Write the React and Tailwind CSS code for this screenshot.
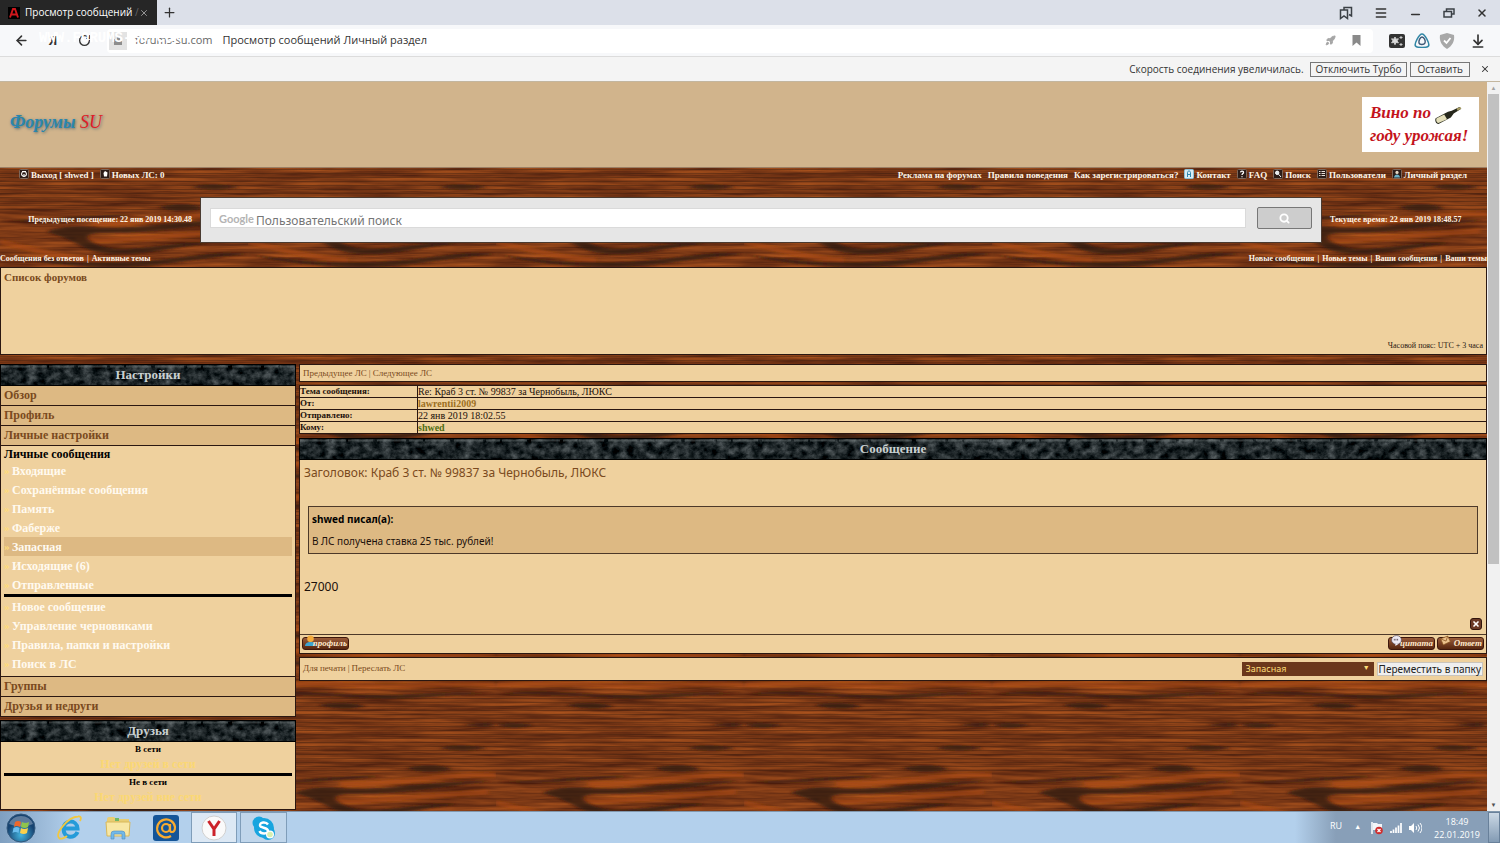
import React, { useState } from 'react';
import {
  ArrowLeft,
  ArrowDownToLine,
  Menu,
  Minus,
  Plus,
  Rocket,
  RotateCw,
  Search,
  X
} from 'lucide-react';

const folders = [
  'Входящие',
  'Сохранённые сообщения',
  'Память',
  'Фаберже',
  'Запасная',
  'Исходящие (6)',
  'Отправленные'
];

const actions = ['Новое сообщение', 'Управление черновиками', 'Правила, папки и настройки', 'Поиск в ЛС'];

const details = [
  { label: 'Тема сообщения:', value: 'Re: Краб 3 ст. № 99837 за Чернобыль, ЛЮКС' },
  { label: 'От:', value: 'lawrentii2009', link: 'text-[#9c6f1e]' },
  { label: 'Отправлено:', value: '22 янв 2019 18:02.55' },
  { label: 'Кому:', value: 'shwed', link: 'text-[#4f6f14]' }
];

// Thin horizontal grain lines in the middle of each plank
const grainLines = [55, 59, 63, 67, 71, 75, 79, 83, 87, 91, 95, 99, 103, 107, 111, 115, 119, 123, 127];

// Repeating wood planks behind the whole forum page
function WoodTexture() {
  return (
    <svg className="absolute inset-0 h-full w-full" aria-hidden="true">
      <defs>
        <filter id="grain" x="0" y="0" width="100%" height="100%" colorInterpolationFilters="sRGB">
          <feTurbulence type="fractalNoise" baseFrequency="0.012 0.22" numOctaves="4" seed="11" stitchTiles="stitch" />
          <feColorMatrix values="0.5 0 0 0 0.24  0.28 0 0 0 0.085  0.08 0 0 0 0.045  0 0 0 0 1" />
        </filter>
        <filter id="soft" x="-20%" y="-50%" width="140%" height="200%">
          <feGaussianBlur stdDeviation="2 0.9" />
        </filter>
        <pattern id="wood" width="248" height="187" patternUnits="userSpaceOnUse">
          <rect width="248" height="187" fill="#803a15" />
          <rect width="248" height="187" filter="url(#grain)" />
          <g stroke="#3c1e0e" strokeOpacity="0.4" strokeWidth="1">
            {grainLines.map((y) => (
              <path key={y} d={`M0 ${y}.5H248`} />
            ))}
          </g>
          <g fill="none" stroke="#b04c10" strokeOpacity="0.6" strokeWidth="5" filter="url(#soft)">
            <path d="M0 42C50 38 95 43 150 43S215 38 248 42" />
            <path d="M75 157C120 160 160 154 240 149" />
            <path d="M0 160C30 166 65 177 100 178" />
            <path d="M92 141C145 143 196 130 248 132" />
            <path d="M0 10C60 6 120 16 248 10" />
          </g>
          <g fill="#2f1710" fillOpacity="0.75" filter="url(#soft)">
            <path d="M46 150C60 144 80 143 100 146C145 146 190 137 248 138C200 143 150 152 105 151C85 151 80 155 100 164C130 173 170 158 210 161C160 168 120 178 90 168C75 162 65 154 46 150Z" />
            <path d="M0 51C40 46 80 51 120 52S200 46 248 51C205 50 165 58 118 55S38 51 0 51Z" />
            <path d="M0 138C55 139 95 130 140 133C95 136 50 143 0 138Z" />
            <path d="M70 62C84 59 102 59 118 63C102 67 84 66 70 62Z" />
            <path d="M0 82C12 79 28 80 38 82C24 86 10 85 0 82Z" />
            <path d="M215 82C229 80 240 79 248 82C240 85 229 84 215 82Z" />
            <path d="M190 105C206 101 225 102 240 105C222 109 205 108 190 105Z" />
            <path d="M158 125C174 121 192 121 205 126C190 130 170 130 158 125Z" />
            <path d="M0 172C40 178 80 182 130 180S210 168 248 172C205 175 160 186 110 185S30 180 0 172Z" />
            <path d="M0 20C60 12 110 26 160 23S220 17 248 20C210 24 170 31 125 27S40 21 0 20Z" />
          </g>
        </pattern>
      </defs>
      <rect width="100%" height="100%" fill="url(#wood)" />
    </svg>
  );
}

function MarbleTitle({ id, children }) {
  return (
    <h2 className="relative h-[22px] overflow-hidden border border-black bg-[#152022] text-center font-['Liberation_Serif',serif] text-[13px] leading-[20px] font-bold text-[#c9d0d1]">
      <svg className="absolute inset-0 h-full w-full" aria-hidden="true">
        <defs>
          <filter id={id} x="0" y="0" width="100%" height="100%" colorInterpolationFilters="sRGB">
            <feTurbulence type="fractalNoise" baseFrequency="0.11 0.13" numOctaves="6" seed="4" />
            <feColorMatrix values="0.6 0 0 0 -0.18  0.6 0 0 0 -0.15  0.6 0 0 0 -0.14  0 0 0 0 1" />
          </filter>
        </defs>
        <rect width="100%" height="100%" filter={`url(#${id})`} />
        <path d="M0 1.5H1500" stroke="#8b9496" strokeOpacity="0.35" strokeWidth="2" strokeDasharray="29 3 14 2 25 4" />
      </svg>
      <span className="relative">{children}</span>
    </h2>
  );
}

function BadgeIcon({ kind }) {
  return (
    <svg viewBox="0 0 10 10" className="mb-1 inline-block h-[10px] w-[10px]" aria-hidden="true">
      <rect x="0.5" y="0.5" width="9" height="9" rx="1" fill={kind === 'contact' ? '#d8edf5' : '#2b1c18'} stroke={kind === 'contact' ? '#8cc0d6' : '#7d685c'} />
      {kind === 'exit' && <path d="M3.4 3.2a2.4 2.4 0 1 0 3.2 0M3 2.6h4M5 5v3" fill="none" stroke="#fff" strokeWidth="1.1" />}
      {kind === 'mail' && <path d="M5 2l2.5 1.5L7 7.5H4L3.5 4z" fill="#fff" />}
      {kind === 'contact' && <path d="M3.500 8V3.500C3.500 1.500 6.500 1.500 6.500 3.500V8M3.500 5.500h3" fill="none" stroke="#2f86ad" />}
      {kind === 'faq' && <path d="M3.500 3.300C3.800 1.500 6.700 1.800 6.500 3.600C6.400 4.600 5 4.700 5 6M5 7.200v1" fill="none" stroke="#fff" strokeWidth="1.300" />}
      {kind === 'search' && <path d="M2.500 3.800a1.700 1.700 0 1 0 3.400 0a1.700 1.700 0 1 0-3.400 0M5.500 5.200L8 8" fill="#dfe9ec" stroke="#fff" />}
      {kind === 'users' && <path d="M2 2.500h1.500M4.500 2.500h3.500M2 4.500h1.500M4.500 4.500h3.500M2 6.500h1.500M4.500 6.500h3.500" stroke="#e8dfd8" />}
      {kind === 'panel' && (
        <>
          <circle cx="5" cy="3.4" r="1.6" fill="#e6d8c4" />
          <path d="M2 8.500C2.200 4.600 7.800 4.600 8 8.500z" fill="#6ab2c8" />
        </>
      )}
    </svg>
  );
}

function NavLink({ icon, children }) {
  return (
    <a href="#" className="inline-flex items-center gap-[2px] whitespace-nowrap">
      {icon && <BadgeIcon kind={icon} />}
      <span>{children}</span>
    </a>
  );
}

function BrowserChrome() {
  return (
    <header className="shrink-0 font-['Open_Sans','Noto_Sans',sans-serif] text-[#333]">
      <div className="flex h-[25px] items-center bg-[#dce0e9]">
        <div className="flex h-full w-[157px] items-center bg-[#262626] px-2 text-white">
          <svg viewBox="0 0 12 12" className="mr-[5px] h-3 w-3 shrink-0" aria-hidden="true">
            <rect width="12" height="12" fill="#000" />
            <path d="M2 10.500L5 2h2l3 8.500M3.600 7.500h4.800" fill="none" stroke="#d0171c" strokeWidth="1.900" />
          </svg>
          <span className="flex-1 text-[10px] whitespace-nowrap">
            Просмотр сообщений <span className="text-[#666]">/</span>
          </span>
          <button aria-label="Закрыть вкладку" className="text-[#aaa]">
            <X size={10} />
          </button>
        </div>
        <button aria-label="Новая вкладка" className="ml-[5px]">
          <Plus size={15} strokeWidth={2} />
        </button>
        <div className="ml-auto flex items-center gap-[21px] pr-3">
          <button aria-label="Закладки">
            <svg viewBox="0 0 14 14" className="h-[14px] w-[14px]" fill="none" stroke="#3b4046" strokeWidth="1.500" aria-hidden="true">
              <path d="M5 4V1.500h7.500V10L10 8.500M1.500 4h7v8.500L5 10l-3.500 2.500z" />
            </svg>
          </button>
          <button aria-label="Меню"><Menu size={14} strokeWidth={2.5} /></button>
          <button aria-label="Свернуть" className="pt-1"><Minus size={13} strokeWidth={3} /></button>
          <button aria-label="Развернуть">
            <svg viewBox="0 0 12 12" className="h-3 w-3" fill="none" stroke="#3b4046" strokeWidth="1.500" aria-hidden="true">
              <path d="M3.500 4V2H11v5H9M1 4.500h7.500V10H1z" />
            </svg>
          </button>
          <button aria-label="Закрыть"><X size={12} strokeWidth={3} /></button>
        </div>
      </div>

      <div className="relative flex h-[32px] items-center border-b border-[#dcdcdc] bg-[#f7f8fa] pl-[14px]">
        <button aria-label="Назад"><ArrowLeft size={15} strokeWidth={2.5} /></button>
        <button aria-label="Яндекс" className="ml-[18px] w-3 text-[13px] font-bold">Я</button>
        <button aria-label="Обновить" className="ml-[19px]"><RotateCw size={13} strokeWidth={2.5} /></button>
        <div className="ml-[16px] flex h-[24px] min-w-0 flex-1 items-center rounded bg-white pr-3">
          <svg viewBox="0 0 18 18" className="mx-[2px] h-[18px] w-[18px] shrink-0" aria-hidden="true">
            <rect width="18" height="18" fill="#e3e3e3" />
            <path d="M5 13V7h3V5h3v4h2v4z" fill="#8d8d8d" />
          </svg>
          <span className="ml-[6px] shrink-0 text-[11px] text-[#666]">forums-su.com</span>
          <input aria-label="Адрес" defaultValue="Просмотр сообщений Личный раздел" className="ml-[10px] min-w-0 flex-1 text-[11px] outline-none" />
          <Rocket size={11} className="mr-4 fill-[#a5a5a5] text-[#a5a5a5]" />
          <svg viewBox="0 0 9 11" className="h-[11px] w-[9px]" aria-hidden="true">
            <path d="M0.500 0h8v11L4.500 7.500L0.500 11z" fill="#8a8a8a" />
          </svg>
        </div>
        <div className="flex items-center gap-[9px] pr-[14px] pl-[16px]">
          <svg viewBox="0 0 16 14" className="h-[14px] w-4" aria-hidden="true">
            <rect width="16" height="14" rx="2" fill="#333" />
            <path d="M6 3l1 2.200 2.400-.4-1.300 2 1.300 2-2.400-.3-1 2.200-1-2.200-2.400.3 1.300-2-1.300-2 2.400.4zM12 2v3M10.500 3.500h3M12 9v3M10.500 10.500h3" fill="#ddd" stroke="#ccc" />
          </svg>
          <svg viewBox="0 0 16 15" className="h-[15px] w-4" fill="none" aria-hidden="true">
            <path d="M8 1C5 1 0 11 1.500 13s11.500 2 13 0S11 1 8 1z" stroke="#3186a5" strokeWidth="1.600" />
            <path d="M8 4c-2 0-3.500 4-3 6s5 2 6 0-1-6-3-6z" stroke="#3e5977" strokeWidth="1.500" />
          </svg>
          <svg viewBox="0 0 16 16" className="h-4 w-4" aria-hidden="true">
            <path d="M1 2l7-2 7 2c1 6-2 11-7 14C3 13 0 8 1 2z" fill="#a8a8a8" />
            <path d="M5 7.500l2.500 2.500L11.500 5" fill="none" stroke="#fff" strokeWidth="1.800" />
          </svg>
          <button aria-label="Загрузки" className="ml-[6px]"><ArrowDownToLine size={16} strokeWidth={2.5} /></button>
        </div>
        <span className="absolute top-[3px] left-[39px] font-['Liberation_Mono',monospace] text-[14px] font-bold text-white">
          WWW.FORUMS-SU.COM
        </span>
      </div>

      <div className="flex h-[25px] items-center justify-end border-b border-[#c3b69f] bg-[#f4f4f4] pr-[10px] text-[10px]">
        <span className="mr-[6px]">Скорость соединения увеличилась.</span>
        <button className="mr-[3px] h-[15px] border border-[#777] px-[5px] leading-[13px]">Отключить Турбо</button>
        <button className="h-[15px] border border-[#777] px-[6px] leading-[13px]">Оставить</button>
        <button aria-label="Закрыть" className="ml-[10px]"><X size={10} strokeWidth={2.5} /></button>
      </div>
    </header>
  );
}

function ForumHeader() {
  return (
    <>
      <div className="flex h-[86px] items-center justify-between border-b border-[#9a7f65] bg-[#d1b48c] pr-2 pl-[10px]">
        <a href="#" className="pb-1 font-['Liberation_Serif',serif] text-[18px] font-bold text-[#2a86ad] italic [text-shadow:1px_1px_3px_#5a6a70]">
          Форумы <span className="font-normal text-[#e01c26]">SU</span>
        </a>
        <a href="#" className="relative flex h-[55px] w-[117px] flex-col justify-center bg-white pb-[2px] pl-2 font-['Liberation_Serif',serif] text-[17px] leading-[23px] font-bold text-[#c4141c] italic">
          <span>Вино по</span>
          <span className="whitespace-nowrap">году урожая!</span>
          <svg viewBox="0 0 30 20" className="absolute top-[9px] right-[16px] h-[19px] w-[30px]" aria-hidden="true">
            <path d="M2 13L15 6l4-1 8-4 2 2-8 5-3 4L5 19c-3 0-4-4-3-6z" fill="#26281c" />
            <path d="M3 13l8-4 3 5-9 4c-2 0-3-3-2-5z" fill="#e4dfba" />
            <path d="M24 2.500L28 1l1 2-4 2z" fill="#a59b63" />
          </svg>
        </a>
      </div>

      <nav className="flex h-[15px] justify-between pr-[20px] pl-[19px] text-[9px] leading-[15px] font-bold text-[#fff5e6]">
        <div className="flex gap-[6px]">
          <NavLink icon="exit">Выход [ shwed ]</NavLink>
          <NavLink icon="mail">Новых ЛС: 0</NavLink>
        </div>
        <div className="flex gap-[6px]">
          <NavLink>Реклама на форумах</NavLink>
          <NavLink>Правила поведения</NavLink>
          <NavLink>Как зарегистрироваться?</NavLink>
          <NavLink icon="contact">Контакт</NavLink>
          <NavLink icon="faq">FAQ</NavLink>
          <NavLink icon="search">Поиск</NavLink>
          <NavLink icon="users">Пользователи</NavLink>
          <NavLink icon="panel">Личный раздел</NavLink>
        </div>
      </nav>

      <div className="mt-[14px] flex items-center text-[8px] font-bold whitespace-nowrap text-[#fff5e6]">
        <p className="w-[200px] shrink-0 pr-2 text-right">Предыдущее посещение: 22 янв 2019 14:30.48</p>
        <form className="flex h-[46px] min-w-0 flex-1 items-start gap-[11px] border border-[#4a3a30] bg-[#e6e6e6] px-[9px] pt-[9px]" onSubmit={(e) => e.preventDefault()}>
          <label className="mt-[1px] flex h-[20px] min-w-0 flex-1 items-center border border-[#dadada] bg-white pl-2">
            <span className="pt-[2px] font-['Lato',sans-serif] text-[11px] text-[#b4b4b4]">Google</span>
            <input
              name="query"
              placeholder="Пользовательский поиск"
              className="ml-[2px] h-full min-w-0 flex-1 pt-1 font-['Noto_Sans',sans-serif] text-[12px] font-normal outline-none placeholder:text-[#757575]"
            />
          </label>
          <button aria-label="Поиск" className="flex h-[22px] w-[55px] items-center justify-center rounded-[2px] border border-[#777] bg-[#cdcdcd] text-white">
            <Search size={11} strokeWidth={4} />
          </button>
        </form>
        <p className="w-[165px] shrink-0 pl-2">Текущее время: 22 янв 2019 18:48.57</p>
      </div>

      <div className="mt-2 flex h-[16px] justify-between text-[8px] leading-[15px] font-bold text-[#fff5e6]">
        <div className="flex gap-[3px]">
          <a href="#">Сообщения без ответов</a>
          <span>|</span>
          <a href="#">Активные темы</a>
        </div>
        <div className="flex gap-[3px]">
          <a href="#">Новые сообщения</a>
          <span>|</span>
          <a href="#">Новые темы</a>
          <span>|</span>
          <a href="#">Ваши сообщения</a>
          <span>|</span>
          <a href="#">Ваши темы</a>
        </div>
      </div>

      <div className="flex h-[88px] flex-col justify-between border border-[#2a1711] bg-[#efd19e] px-[3px] py-[1px]">
        <a href="#" className="text-[11px] leading-[16px] font-bold text-[#7a4a20]">Список форумов</a>
        <p className="text-right text-[8px] leading-[14px] text-[#2a1711]">Часовой пояс: UTC + 3 часа</p>
      </div>
    </>
  );
}

function SectionLink({ children }) {
  return (
    <a href="#" className="block border-b border-[#2a1711] bg-[#ddb983] px-[3px] text-[12px] leading-[19px] font-bold text-[#7a4a20]">
      {children}
    </a>
  );
}

function FolderLink({ active, children }) {
  return (
    <li className={active ? 'bg-[#ddb983]' : ''}>
      <a href="#" className="flex h-[19px] items-center gap-[2px] text-[12px] font-bold text-[#fffaf0]">
        <span className="w-[6px] text-[11px] text-[#ffdc78]">»</span>
        {children}
      </a>
    </li>
  );
}

function Sidebar() {
  return (
    <aside className="w-[296px] shrink-0">
      <MarbleTitle id="marble-settings">Настройки</MarbleTitle>
      <div className="border-x border-[#2a1711] bg-[#efd19e]">
        <SectionLink>Обзор</SectionLink>
        <SectionLink>Профиль</SectionLink>
        <SectionLink>Личные настройки</SectionLink>
        <div className="border-b border-[#2a1711] px-[3px] pb-[3px]">
          <h3 className="pt-[2px] text-[12px] leading-[13px] font-bold text-black">Личные сообщения</h3>
          <ul>
            {folders.map((folder) => (
              <FolderLink key={folder} active={folder === 'Запасная'}>{folder}</FolderLink>
            ))}
          </ul>
          <hr className="border-t-[3px] border-black" />
          <ul>
            {actions.map((action) => (
              <FolderLink key={action}>{action}</FolderLink>
            ))}
          </ul>
        </div>
        <SectionLink>Группы</SectionLink>
        <SectionLink>Друзья и недруги</SectionLink>
      </div>
      <div className="mt-[3px]">
        <MarbleTitle id="marble-friends">Друзья</MarbleTitle>
        <div className="border-x border-b border-[#2a1711] bg-[#efd19e] px-[3px] pb-1 text-center font-bold">
          <h3 className="text-[9px] leading-[15px] text-black">В сети</h3>
          <p className="pb-[2px] text-[12px] leading-[14px] text-[#fbd873]">Нет друзей в сети</p>
          <hr className="border-t-[3px] border-black" />
          <h3 className="text-[9px] leading-[13px] text-black">Не в сети</h3>
          <p className="text-[12px] leading-[16px] text-[#fbd873]">Нет друзей вне сети</p>
        </div>
      </div>
    </aside>
  );
}

function ImageButton({ icon, children }) {
  return (
    <button className="relative flex h-[13px] w-[47px] items-center justify-end rounded-[3px] border border-[#3d170c] bg-linear-to-b from-[#9a5c3a] to-[#57260f] pr-[1px] text-[9px] font-bold whitespace-nowrap text-[#ffe9cc] italic">
      <svg viewBox="0 0 10 10" className="absolute -top-[3px] left-[2px] h-[11px] w-[11px]" aria-hidden="true">
        {icon === 'user' && (
          <>
            <circle cx="5" cy="3.500" r="3" fill="#f3aa3c" />
            <path d="M0 10c0-5 10-5 10 0z" fill="#3fa3cf" />
          </>
        )}
        {icon === 'quote' && (
          <>
            <ellipse cx="5" cy="4.500" rx="4.500" ry="4" fill="#eee9f2" stroke="#554a5a" strokeWidth="0.600" />
            <path d="M3 3.500v1.500M4.500 3.500v1.500M6 3.500v1.500" stroke="#554a5a" strokeWidth="0.800" />
            <path d="M4 8l0 2 3-2z" fill="#eee9f2" />
          </>
        )}
        {icon === 'reply' && (
          <>
            <path d="M0.500 3.500L7 1l2.500 5L3 9z" fill="#ecc18d" stroke="#875321" strokeWidth="0.700" />
            <path d="M0.500 3.500L5.500 5.500L7 1" fill="none" stroke="#875321" strokeWidth="0.700" />
          </>
        )}
      </svg>
      <span className="relative">{children}</span>
    </button>
  );
}

function Message() {
  const [folder, setFolder] = useState('Запасная');

  return (
    <main className="min-w-0 flex-1">
      <div className="flex gap-[2px] border border-[#2a1711] bg-[#efd19e] px-[3px] text-[9px] leading-[16px] text-[#7a4a20]">
        <a href="#">Предыдущее ЛС</a>
        <span>|</span>
        <a href="#">Следующее ЛС</a>
      </div>

      <table className="mt-[3px] w-full border-collapse bg-[#efd19e] text-left text-[10px] leading-[11px] text-[#1c100a]">
        <tbody>
          {details.map((row) => (
            <tr key={row.label}>
              <th scope="row" className="w-[118px] border border-[#2a1711] p-0 text-[9px] font-bold">{row.label}</th>
              <td className="border border-[#2a1711] p-0">
                {row.link ? <a href="#" className={`font-bold ${row.link}`}>{row.value}</a> : row.value}
              </td>
            </tr>
          ))}
        </tbody>
      </table>

      <div className="mt-1">
        <MarbleTitle id="marble-message">Сообщение</MarbleTitle>
        <article className="border border-t-0 border-[#2a1711] bg-[#efd19e] font-['Noto_Sans',sans-serif] text-[#1c100a]">
          <div className="flex flex-col px-1 pt-1">
            <h3 className="text-[12px] leading-[18px] text-[#7a4a20]">Заголовок: Краб 3 ст. № 99837 за Чернобыль, ЛЮКС</h3>
            <blockquote className="mx-1 mt-[24px] border border-[#4d3929] bg-[#ddb983] px-[3px] py-1">
              <cite className="block text-[10px] leading-[17px] font-bold text-black not-italic">shwed писал(а):</cite>
              <p className="mt-[5px] text-[10px] leading-[16px]">В ЛС получена ставка 25 тыс. рублей!</p>
            </blockquote>
            <p className="mt-[24px] text-[12px] leading-[18px]">27000</p>
            <button aria-label="Удалить" className="mt-[22px] mb-1 flex h-3 w-3 items-center justify-center self-end rounded-[3px] border border-[#32150c] bg-[#6b3a26] text-white">
              <X size={8} strokeWidth={5} />
            </button>
          </div>
          <div className="flex gap-[2px] border-t border-[#4d3929] px-[2px] pt-[2px] pb-[3px] font-['Liberation_Serif',serif]">
            <ImageButton icon="user">профиль</ImageButton>
            <span className="flex-1" />
            <ImageButton icon="quote">цитата</ImageButton>
            <ImageButton icon="reply">Ответ</ImageButton>
          </div>
        </article>
      </div>

      <div className="mt-[3px] flex h-[24px] items-center border border-[#2a1711] bg-[#efd19e] px-[3px] text-[9px] text-[#7a4a20]">
        <p className="flex flex-1 gap-[2px]">
          <a href="#">Для печати</a>
          <span>|</span>
          <a href="#">Переслать ЛС</a>
        </p>
        <div className="relative">
          <select
            aria-label="Папка"
            value={folder}
            onChange={(e) => setFolder(e.target.value)}
            className="block h-[14px] w-[132px] appearance-none bg-[#6b371c] pl-1 font-['Noto_Sans',sans-serif] text-[9px] leading-[14px] text-[#fbdc78]"
          >
            {folders.map((name) => (
              <option key={name}>{name}</option>
            ))}
          </select>
          <span className="pointer-events-none absolute top-0 right-1 text-[7px] leading-[12px] text-[#fbdc78]">▼</span>
        </div>
        <button className="ml-[3px] h-[14px] border border-[#c9c4bc] bg-[#efefef] px-[1px] font-['Noto_Sans',sans-serif] text-[10px] leading-[12px] whitespace-nowrap text-[#222]">
          Переместить в папку
        </button>
      </div>
    </main>
  );
}

function Taskbar() {
  return (
    <footer className="flex h-[32px] shrink-0 items-center border-t border-[#8197ad] bg-linear-to-r from-[#7f9fc0] via-[#b3d0ec] via-5% to-[#b3d0ec] font-['Open_Sans',sans-serif] text-white">
      <button aria-label="Пуск" className="ml-[6px]">
        <svg viewBox="0 0 30 30" className="h-[30px] w-[30px]" aria-hidden="true">
          <defs>
            <radialGradient id="orb" cy="0.75">
              <stop offset="0" stopColor="#43b5e0" />
              <stop offset="1" stopColor="#174371" />
            </radialGradient>
          </defs>
          <circle cx="15" cy="15" r="14" fill="url(#orb)" stroke="#32587c" />
          <path d="M3 11a13 13 0 0 1 24 0q-11 5-24 0z" fill="#fff" fillOpacity="0.3" />
          <path d="M9 9q3-2 6 0l-1 5q-3-2-6 0z" fill="#ee682b" />
          <path d="M16 9q3 2 7 0l-1 5q-3 2-7 0z" fill="#8fc54b" />
          <path d="M7.500 15q3-2 6 0l-1 5q-3-2-6 0z" fill="#69bdee" />
          <path d="M15 15q3 2 7 0l-1 5q-3 2-7 0z" fill="#fbd04c" />
        </svg>
      </button>
      <button aria-label="Internet Explorer" className="ml-[20px]">
        <svg viewBox="0 0 28 28" className="h-7 w-7" fill="none" aria-hidden="true">
          <path d="M21.500 18C19 24.500 8 25 7.500 15C7 5.500 21 5 21.500 14.500H9" stroke="#259bd9" strokeWidth="4" />
          <path d="M3 24C-1 19 12 3 22 2.500C26 2 25 5 24 7M3 24C5 26 10 23 11 22" stroke="#f1c740" strokeWidth="1.800" />
        </svg>
      </button>
      <button aria-label="Проводник" className="ml-[20px]">
        <svg viewBox="0 0 28 28" className="h-7 w-7" aria-hidden="true">
          <path d="M3 5q0-2 2-2h5l2 2h13v17H3z" fill="#e8cd73" />
          <path d="M2 8h24l-1 14H3z" fill="#f8e7a4" stroke="#d8b85a" />
          <path d="M11 4h4v3h-4z" fill="#6fb765" />
          <path d="M7 25v-5q0-3 3-3h8q3 0 3 3v5h-3v-5h-8v5z" fill="#72b9e8" stroke="#4e8cbf" strokeWidth="0.600" />
        </svg>
      </button>
      <button aria-label="Почта" className="ml-[21px]">
        <svg viewBox="0 0 26 26" className="h-[26px] w-[26px]" fill="none" aria-hidden="true">
          <rect width="26" height="26" rx="3" fill="#145598" />
          <circle cx="13" cy="13" r="4" stroke="#f8ab30" strokeWidth="2.200" />
          <path d="M17 9v6q0 2 2 2q3 0 3-5A9 9 0 1 0 18 21" stroke="#f8ab30" strokeWidth="2.200" />
        </svg>
      </button>
      <button aria-label="Яндекс.Браузер" className="ml-[12px] flex h-full w-[46px] items-center justify-center border border-[#7f9db9] bg-[#dce8f4]">
        <svg viewBox="0 0 26 26" className="h-[26px] w-[26px]" fill="none" aria-hidden="true">
          <circle cx="13" cy="13" r="12" fill="#fafafa" stroke="#d0d0d0" />
          <path d="M7.500 6L13 14L18.500 6M13 13V21" stroke="#cc2229" strokeWidth="3" />
        </svg>
      </button>
      <button aria-label="Skype" className="ml-[3px] flex h-full w-[47px] items-center justify-center border border-[#7f9db9] bg-[#c0d6eb]">
        <svg viewBox="0 0 26 26" className="h-[26px] w-[26px]" aria-hidden="true">
          <circle cx="8" cy="8" r="6.500" fill="#18a5df" />
          <circle cx="17" cy="18" r="7" fill="#18a5df" />
          <circle cx="13" cy="13" r="10" fill="#18a5df" />
          <path d="M17 9.500C15 6.500 8.500 7 9 10.500C9.500 13.500 17 12 17 16C17 19 10 19.500 8.500 16" fill="none" stroke="#fff" strokeWidth="2.400" />
          <circle cx="19" cy="19.500" r="4" fill="#fff" />
          <circle cx="19" cy="19.500" r="2.800" fill="#d6efb0" />
        </svg>
      </button>
      <div className="ml-auto flex h-full items-center bg-linear-to-r from-transparent to-[#889fb8] to-20% pl-[35px] text-[9px]">
        <span className="mb-1">RU</span>
        <span className="ml-[12px] text-[7px]">▲</span>
        <svg viewBox="0 0 14 14" className="ml-[9px] h-[14px] w-[14px]" aria-hidden="true">
          <path d="M2 1v12" stroke="#fff" strokeWidth="1.500" />
          <path d="M3 2h4l1 1h4v6H3z" fill="#f2f5f8" />
          <circle cx="9" cy="9.500" r="3.800" fill="#cf2d2d" />
          <path d="M7.500 8l3 3M10.500 8l-3 3" stroke="#fff" strokeWidth="1.200" />
        </svg>
        <svg viewBox="0 0 14 12" className="ml-[5px] h-3 w-[14px]" aria-hidden="true">
          <path d="M2 9v2M4.500 7.500v3.500M7 5.500v5.500M9.500 3.500v7.500M12 1v10" stroke="#fff" strokeWidth="1.700" />
        </svg>
        <svg viewBox="0 0 14 12" className="ml-[5px] h-3 w-[14px]" aria-hidden="true">
          <path d="M1 4h2l3-3v10L3 8H1z" fill="#fff" />
          <path d="M8 4q1.500 2 0 4M10 2.500q3 3.500 0 7M12 1q4 5 0 10" fill="none" stroke="#fff" />
        </svg>
        <time className="ml-[12px] text-center text-[9px] leading-[13px]">
          18:49
          <br />
          22.01.2019
        </time>
        <button aria-label="Показать рабочий стол" className="ml-[8px] h-full w-3 border border-[#68809a] bg-linear-to-b from-[#cbd8e5] to-[#839bb4]" />
      </div>
    </footer>
  );
}

export default function App() {
  return (
    <div className="flex h-screen flex-col overflow-hidden">
      <BrowserChrome />
      <div className="flex min-h-0 flex-1">
        <div className="relative min-w-0 flex-1 overflow-hidden font-['Liberation_Serif',serif]">
          <WoodTexture />
          <div className="relative">
            <ForumHeader />
            <div className="mt-[9px] flex gap-[3px]">
              <Sidebar />
              <Message />
            </div>
          </div>
        </div>
        <div className="flex w-[13px] shrink-0 flex-col items-center justify-between bg-[#f1f1f1] text-[6px] leading-[12px] text-[#505050]" aria-hidden="true">
          <span className="text-[#a3a3a3]">▲</span>
          <div className="w-[11px] flex-[2] bg-[#c1c1c1]" />
          <div className="flex-1" />
          <span>▼</span>
        </div>
      </div>
      <Taskbar />
    </div>
  );
}
